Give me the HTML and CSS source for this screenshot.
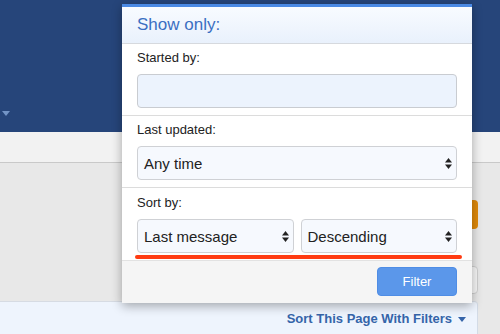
FILE: index.html
```html
<!DOCTYPE html>
<html>

<head>
    <title>Forum - Show only</title>
    <link rel="stylesheet" href="styles.css">
</head>

<body>
    <div class="page">
        <header class="masthead">
            <span class="nav-caret"></span>
        </header>
        <div class="subnav"></div>
        <main class="content">
            <div class="side-tools">
                <button class="post-button">Post thread</button>
                <div class="quick-search"></div>
            </div>
        </main>
        <div class="sort-bar">
            <a href="#" class="sort-link">Sort This Page With Filters</a>
            <svg class="sort-caret" viewBox="0 0 8 5"><polygon points="0,0 8,0 4,5" /></svg>
        </div>

        <div class="filter-popup">
            <div class="popup-title">Show only:</div>

            <div class="popup-section">
                <label class="field-label">Started by:</label>
                <div class="text-field"></div>
            </div>

            <div class="popup-section">
                <label class="field-label">Last updated:</label>
                <div class="select-box">
                    <span>Any time</span>
                    <svg class="select-arrows" viewBox="0 0 7 11"><polygon points="3.5,0 7,4.5 0,4.5" /><polygon points="0,6.5 7,6.5 3.5,11" /></svg>
                </div>
            </div>

            <div class="popup-section last">
                <label class="field-label">Sort by:</label>
                <div class="select-row">
                    <div class="select-box">
                        <span>Last message</span>
                        <svg class="select-arrows" viewBox="0 0 7 11"><polygon points="3.5,0 7,4.5 0,4.5" /><polygon points="0,6.5 7,6.5 3.5,11" /></svg>
                    </div>
                    <div class="select-box">
                        <span>Descending</span>
                        <svg class="select-arrows" viewBox="0 0 7 11"><polygon points="3.5,0 7,4.5 0,4.5" /><polygon points="0,6.5 7,6.5 3.5,11" /></svg>
                    </div>
                </div>
            </div>

            <div class="popup-footer">
                <button class="filter-button">Filter</button>
            </div>

            <div class="markup-line"></div>
        </div>
    </div>
</body>

</html>
```

FILE: styles.css
```css
body {
    margin: 0;
    padding: 0;
    font-family: "Liberation Sans", Arial, sans-serif;
    color: #222;
    background: #e8e8e8;
    overflow: hidden;
}

.page {
    position: relative;
    width: 500px;
    height: 334px;
    display: flex;
    flex-direction: column;
}

.masthead {
    height: 132px;
    background: #26457a;
    display: flex;
    align-items: flex-end;
    padding: 0 0 16px 2px;
    box-sizing: border-box;
}

.nav-caret {
    width: 0;
    height: 0;
    border-left: 4px solid transparent;
    border-right: 4px solid transparent;
    border-top: 5px solid #7394c6;
}

.subnav {
    height: 30px;
    background: #f2f2f2;
    border-bottom: 1px solid #c9c9c9;
}

.content {
    padding: 37px 22px 7px 0;
    background: #e8e8e8;
}

.side-tools {
    display: flex;
    flex-direction: column;
    align-items: flex-end;
    gap: 37px;
}

.post-button {
    height: 29px;
    width: 90px;
    border: none;
    border-radius: 4px;
    background: #df890a;
    color: white;
    font-family: inherit;
    font-size: 13px;
}

.quick-search {
    width: 200px;
    height: 28px;
    box-sizing: border-box;
    background: #f7f7f7;
    border: 1px solid #cfcfcf;
    border-radius: 4px;
}

.sort-bar {
    flex: 1;
    margin-right: 22px;
    background: #eef4fd;
    border-top: 1px solid #d6dbe3;
    border-right: 1px solid #d3dbe6;
    border-top-right-radius: 4px;
    display: flex;
    justify-content: flex-end;
    align-items: flex-start;
    padding: 9px 11px 0 0;
}

.sort-link {
    font-size: 13px;
    font-weight: bold;
    color: #3564a9;
    text-decoration: none;
    line-height: 16px;
}

.sort-caret {
    width: 8px;
    height: 5px;
    margin: 6px 0 0 6px;
    fill: #3564a9;
}

/* popup over the page */
.filter-popup {
    position: absolute;
    left: 122px;
    top: 4px;
    width: 350px;
    background: white;
    border-top: 3px solid #4a89e4;
    box-shadow: 0 3px 10px rgba(0, 0, 0, 0.32);
}

.popup-title {
    height: 36px;
    line-height: 36px;
    padding: 0 15px;
    font-size: 17px;
    color: #3b6fc2;
    background: linear-gradient(#f8fbff, #e9f1fc);
    border-bottom: 1px solid #d6d9de;
}

.popup-section {
    padding: 6px 15px 7px;
    border-bottom: 1px solid #dcdcdc;
}

.popup-section.last {
    padding-top: 7px;
    border-bottom: none;
}

.field-label {
    display: block;
    font-size: 13px;
    line-height: 16px;
    margin-bottom: 8px;
}

.text-field {
    height: 34px;
    box-sizing: border-box;
    background: #ecf3fd;
    border: 1px solid #c9ccd1;
    border-radius: 4px;
}

.select-box {
    height: 34px;
    box-sizing: border-box;
    background: #f6f9fe;
    border: 1px solid #cfd1d5;
    border-radius: 4px;
    display: flex;
    align-items: center;
    justify-content: space-between;
    padding: 0 4px 0 6px;
    font-size: 15px;
}

.select-arrows {
    width: 7px;
    height: 11px;
    fill: #222;
}

.select-row {
    display: flex;
    gap: 7px;
}

.select-row .select-box {
    flex: 1;
}

.popup-footer {
    display: flex;
    justify-content: flex-end;
    padding: 6px 15px 7px;
    background: #f5f5f5;
    border-top: 1px solid #e2e2e2;
}

.filter-button {
    width: 80px;
    height: 29px;
    border: 1px solid #4f8de5;
    border-radius: 4px;
    background: #5b97ea;
    color: white;
    font-family: inherit;
    font-size: 13px;
}

/* red annotation stroke */
.markup-line {
    position: absolute;
    left: 13px;
    top: 248px;
    width: 327px;
    height: 4px;
    border-radius: 2px;
    background: #ff3b12;
}
```
